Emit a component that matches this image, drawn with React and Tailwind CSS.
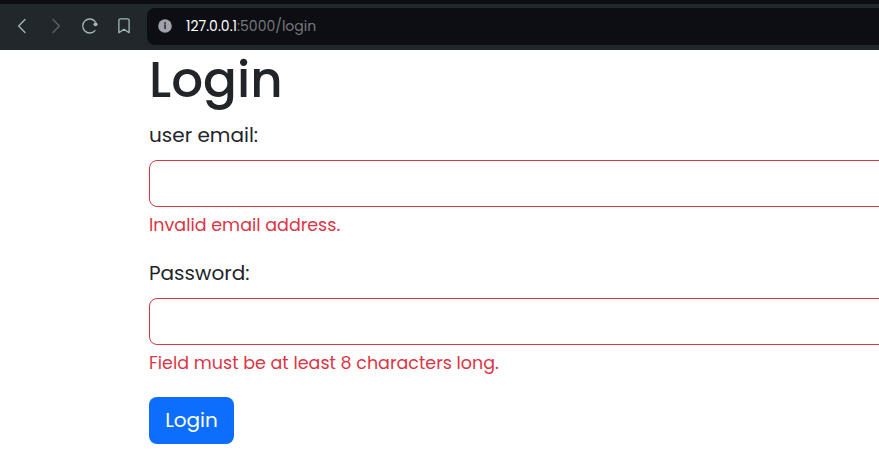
function BrowserBar() {
  return (
    <header className="flex h-[50px] items-stretch border-t-4 border-[#0d0e14] bg-[#21272a]">
      <nav className="flex w-[147px] shrink-0 items-center">
        <svg width="147" height="46" viewBox="0 4 147 46" fill="none" stroke="#a3b8b9" strokeWidth="1.3" strokeLinecap="round" strokeLinejoin="round">
          <path d="M25 19.5 18.7 26l6.3 6.500" />
          <path d="m53 19.5 6.300 6.500-6.300 6.500" stroke="#5b6265" />
          <path d="M95.2 21.6A7 7 0 1 0 95 30.6" />
          <circle cx="95.5" cy="24.3" r="2" fill="#a3b8b9" stroke="none" />
          <path d="M120.5 18.800h7a1.600 1.600 0 0 1 1.600 1.600v12.300L124 29.200l-5.100 3.500V20.400a1.600 1.600 0 0 1 1.600-1.600Z" />
        </svg>
      </nav>
      <div className="my-1 mb-[5px] flex min-w-0 grow items-center rounded-l-lg bg-[#0d0e14] pl-[11px]">
        <svg className="mb-px" width="14" height="14" viewBox="0 0 14 14">
          <circle cx="7" cy="7" r="6.8" fill="#a0a2aa" />
          <path d="M6 6.300h1.100v3.700" fill="none" stroke="#30323a" strokeWidth="1.600" />
          <circle cx="7" cy="3.900" r="1" fill="#30323a" />
        </svg>
        <p className="mb-0.5 ml-[14px] text-[14px] leading-5 whitespace-nowrap text-[#777777]">
          <span className="text-white">127.0.0.1</span>
          <span>:5000/login</span>
        </p>
      </div>
    </header>
  );
}

function Field({ id, label, type, error }) {
  return (
    <div className="h-[138px]">
      <label htmlFor={id} className="block h-[38px] text-[20px] leading-[26px]">
        {label}
      </label>
      <input id={id} type={type} className="block h-[47px] w-full rounded-lg border border-[#dc3545] bg-white px-4 outline-none" />
      <p className="mt-[5px] text-[17.5px] leading-[26px] text-[#dc3545]">{error}</p>
    </div>
  );
}

export default function App() {
  return (
    <div className="h-[456px] overflow-hidden bg-white font-['Poppins','Inter',sans-serif] text-[#212529]">
      <BrowserBar />
      <main className="ml-[149px] w-[900px]">
        <h1 className="h-[72px] text-[50px] leading-[60px] font-medium">Login</h1>
        <form noValidate>
          <Field id="email" label="user email:" type="email" error="Invalid email address." />
          <Field id="password" label="Password:" type="password" error="Field must be at least 8 characters long." />
          <button type="button" className="-mt-px block h-[47px] w-[85px] rounded-lg bg-[#0d6efd] pb-0.5 text-[20px] leading-[30px] text-white">
            Login
          </button>
        </form>
      </main>
    </div>
  );
}
